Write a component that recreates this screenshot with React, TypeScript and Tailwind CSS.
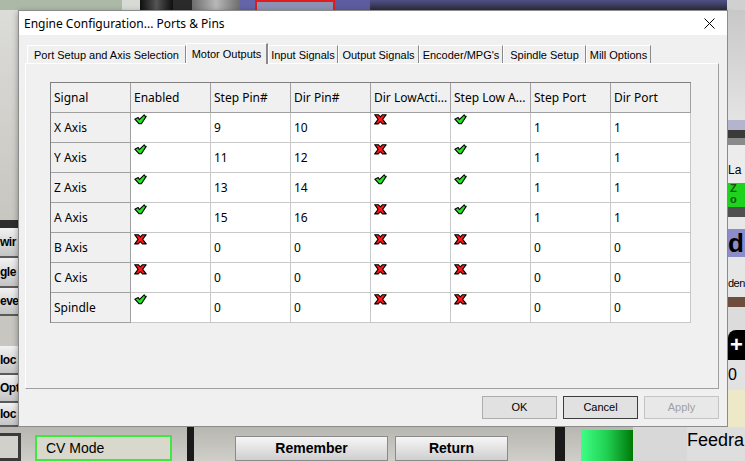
import React from "react";

const Check = () => (
  <svg width="13" height="11" viewBox="0 0 13 11" className="block">
    <path
      d="M0.8 5.2 L4.2 3.6 L5.3 5.6 L10.2 0.8 L11 2.2 L12.2 2.4 L7.4 9.8 L5.2 9.8 Z"
      fill="#1ee61e"
      stroke="#000"
      strokeWidth="1.1"
      strokeLinejoin="round"
    />
  </svg>
);

const Cross = () => (
  <svg width="13" height="11" viewBox="0 0 13 11" className="block">
    <path
      d="M0.7 0.7 L4.3 0.7 L6.3 2.9 L8.5 0.7 L12.2 0.7 L8.6 5.3 L12.2 9.9 L8.5 9.9 L6.3 7.6 L4.3 9.9 L0.7 9.9 L4.1 5.3 Z"
      fill="#ff1616"
      stroke="#000"
      strokeWidth="1.1"
      strokeLinejoin="round"
    />
  </svg>
);

const headers = [
  "Signal",
  "Enabled",
  "Step Pin#",
  "Dir Pin#",
  "Dir LowActi...",
  "Step Low A...",
  "Step Port",
  "Dir Port",
];

const rows: string[][] = [
  ["X Axis", "c", "9", "10", "x", "c", "1", "1"],
  ["Y Axis", "c", "11", "12", "x", "c", "1", "1"],
  ["Z Axis", "c", "13", "14", "c", "c", "1", "1"],
  ["A Axis", "c", "15", "16", "x", "c", "1", "1"],
  ["B Axis", "x", "0", "0", "x", "x", "0", "0"],
  ["C Axis", "x", "0", "0", "x", "x", "0", "0"],
  ["Spindle", "c", "0", "0", "x", "x", "0", "0"],
];

const tabs = [
  { label: "Port Setup and Axis Selection", w: "w-[159px]" },
  { label: "Motor Outputs", w: "w-[82px]", active: true },
  { label: "Input Signals", w: "w-[70px]" },
  { label: "Output Signals", w: "w-[81px]" },
  { label: "Encoder/MPG's", w: "w-[84px]" },
  { label: "Spindle Setup", w: "w-[83px]" },
  { label: "Mill Options", w: "w-[65px]" },
];

function Table() {
  return (
    <div className="w-[641px] border-t border-l border-[#808080] grid grid-cols-[repeat(8,80px)] font-['Noto_Sans',sans-serif] text-[12px] text-black">
      {headers.map((h) => (
        <div
          key={h}
          className="h-[30px] bg-[#f0f0f0] border-r border-b border-[#a0a0a0] flex items-center pl-[3px] whitespace-nowrap overflow-hidden"
        >
          {h}
        </div>
      ))}
      {rows.map((r) =>
        r.map((v, i) => {
          if (i === 0)
            return (
              <div
                key={r[0] + i}
                className="h-[30px] bg-[#f0f0f0] border-r border-b border-[#a0a0a0] flex items-center pl-[3px]"
              >
                {v}
              </div>
            );
          if (v === "c" || v === "x")
            return (
              <div
                key={r[0] + i}
                className="h-[30px] bg-white border-r border-b border-[#c8c8c8] pl-[3px] pt-[1px]"
              >
                {v === "c" ? <Check /> : <Cross />}
              </div>
            );
          return (
            <div
              key={r[0] + i}
              className="h-[30px] bg-white border-r border-b border-[#c8c8c8] flex items-center pl-[3px] pt-[1px]"
            >
              {v}
            </div>
          );
        })
      )}
    </div>
  );
}

function Dialog() {
  return (
    <div className="w-[710px] h-[417px] flex flex-col border border-[#8c8c8c] bg-[#f0f0f0] shadow-[0_2px_6px_rgba(0,0,0,0.35)]">
      <div className="h-[24px] bg-white flex items-center justify-between pl-[5px] pr-[12px] pt-[1px] font-['Noto_Sans',sans-serif] text-[12px] text-black">
        <span>Engine Configuration... Ports &amp; Pins</span>
        <svg width="11" height="11" viewBox="0 0 11 11" className="block">
          <path d="M0.5 0.5 L10.5 10.5 M10.5 0.5 L0.5 10.5" stroke="#000" strokeWidth="1" />
        </svg>
      </div>
      <div className="flex-1 flex flex-col px-[6px] pt-[8px]">
        <div className="h-[20px] flex items-end pl-[2px] font-['Liberation_Sans',sans-serif] text-[11px] text-black">
          {tabs.map((t) =>
            t.active ? (
              <div
                key={t.label}
                className={`${t.w} h-[21px] -mb-px relative z-10 bg-[#f0f0f0] border-t border-l border-white border-r-2 border-r-[#8a8a8a] flex items-center justify-center whitespace-nowrap`}
              >
                {t.label}
              </div>
            ) : (
              <div
                key={t.label}
                className={`${t.w} h-[18px] self-end bg-[#f0f0f0] border-t border-l border-white border-r border-r-[#8a8a8a] flex items-center justify-center whitespace-nowrap pt-[1px]`}
              >
                {t.label}
              </div>
            )
          )}
        </div>
        <div className="w-[694px] h-[326px] border-t border-l border-white border-r border-b border-r-[#a0a0a0] border-b-[#a0a0a0] bg-[#f0f0f0] pl-[24px] pt-[18px]">
          <Table />
        </div>
        <div className="mt-[7px] w-[694px] flex justify-end gap-[6px] font-['Liberation_Sans',sans-serif] text-[11px]">
          <div className="w-[75px] h-[23px] bg-[#e1e1e1] border border-[#adadad] flex items-center justify-center text-black">
            OK
          </div>
          <div className="w-[75px] h-[23px] bg-[#e1e1e1] border border-[#3c3c3c] flex items-center justify-center text-black">
            Cancel
          </div>
          <div className="w-[75px] h-[23px] bg-[#e8e8e8] border border-[#c4c4c4] flex items-center justify-center text-[#a0a0a0]">
            Apply
          </div>
        </div>
      </div>
    </div>
  );
}

function TopStrip() {
  return (
    <div className="h-[10px] flex">
      <div className="w-[122px] bg-[#acb9a6]" />
      <div className="w-[18px] bg-[#d8dad6]" />
      <div className="w-[33px] bg-gradient-to-r from-[#101010] via-[#555] to-[#101010]" />
      <div className="w-[19px] bg-[#2a2a2a]" />
      <div className="w-[48px] bg-gradient-to-r from-[#6e6e6e] via-[#b8b8b8] to-[#6e6e6e]" />
      <div className="w-[15px] bg-[#6464a8]" />
      <div className="w-[80px] border-x-2 border-t-2 border-[#e01c1c] bg-[#8c92b4]" />
      <div className="w-[35px] bg-[#5c5c9e]" />
      <div className="w-[357px] bg-gradient-to-b from-[#50508a] to-[#2c2c3a]" />
      <div className="w-[18px] bg-[#d0d0d0]" />
    </div>
  );
}

function LeftBtn({ t, h }: { t: string; h: string }) {
  return (
    <div
      className={`${h} bg-gradient-to-b from-[#f2f2f2] to-[#c4c4c4] border-b-2 border-[#5a5a5a] flex items-center overflow-hidden font-['Liberation_Sans',sans-serif] font-bold text-[12px] tracking-[-0.5px] text-black whitespace-nowrap`}
    >
      {t}
    </div>
  );
}

function LeftStrip() {
  return (
    <div className="w-[18px] flex flex-col bg-[#d4d2cc]">
      <div className="h-[210px] bg-gradient-to-b from-[#dcdcd8] to-[#c8c6c0]" />
      <div className="h-[8px] bg-[#2e2e2e]" />
      <LeftBtn t="wir" h="h-[30px]" />
      <LeftBtn t="gle" h="h-[30px]" />
      <LeftBtn t="eve" h="h-[28px]" />
      <div className="h-[30px] bg-[#c8c6c0]" />
      <LeftBtn t="loc" h="h-[29px]" />
      <LeftBtn t="Opt" h="h-[28px]" />
      <LeftBtn t="loc" h="h-[24px]" />
    </div>
  );
}

function RightStrip() {
  return (
    <div className="w-[17px] flex flex-col bg-[#d6d6d6] overflow-hidden font-['Liberation_Sans',sans-serif] text-black">
      <div className="h-[110px] bg-gradient-to-b from-[#c8c8c8] to-[#e4e4e4]" />
      <div className="h-[10px] bg-[#b4b4cc]" />
      <div className="h-[8px] bg-[#3a3a3a]" />
      <div className="h-[7px] bg-[#8a8a8a]" />
      <div className="h-[38px] bg-[#ececec] flex items-end pb-[4px] text-[12px] whitespace-nowrap">La</div>
      <div className="h-[24px] bg-[#1ed21e] text-[11px] font-bold leading-[11px] text-[#115511] pl-[2px]">
        Z<br />o
      </div>
      <div className="h-[10px] bg-[#505050]" />
      <div className="h-[12px] bg-[#e8e8e8]" />
      <div className="h-[28px] bg-[#8c8cc8] font-bold text-[26px] leading-[28px] whitespace-nowrap">d</div>
      <div className="h-[40px] bg-[#e6e6e6] flex items-end pb-[6px] text-[11px] tracking-[-0.5px] whitespace-nowrap">den</div>
      <div className="h-[10px] bg-[#6e4c3e]" />
      <div className="h-[23px] bg-[#dcdcdc]" />
      <div className="h-[30px] bg-[#dcdcdc]">
        <div className="w-[17px] h-[30px] bg-black rounded-tl-[8px] flex items-center justify-center text-white font-bold text-[22px] leading-none">
          +
        </div>
      </div>
      <div className="h-[30px] bg-[#e2e2e2] flex items-center text-[16px]">0</div>
      <div className="flex-1 bg-[#ece8c8]" />
    </div>
  );
}

function BottomStrip() {
  return (
    <div className="h-[34px] flex bg-gradient-to-b from-[#b8b6b0] to-[#d0cec8] font-['Liberation_Sans',sans-serif] text-black">
      <div className="w-[21px] mt-[6px] border-y-[3px] border-r-[3px] border-[#3a3a3a] bg-[#d2d0ca]" />
      <div className="w-[14px]" />
      <div className="w-[137px] mt-[8px] border-2 border-[#3ee83e] bg-[#d8d8cc] flex items-center pl-[9px] text-[14px]">
        CV Mode
      </div>
      <div className="w-[15px]" />
      <div className="w-[7px] bg-[#1a1a1a]" />
      <div className="w-[41px]" />
      <div className="w-[153px] mt-[9px] border border-[#8a8a8a] bg-gradient-to-b from-[#f6f6f6] to-[#cfcfcf] flex items-center justify-center font-bold text-[14px]">
        Remember
      </div>
      <div className="w-[7px]" />
      <div className="w-[113px] mt-[9px] border border-[#8a8a8a] bg-gradient-to-b from-[#f6f6f6] to-[#cfcfcf] flex items-center justify-center font-bold text-[14px]">
        Return
      </div>
      <div className="w-[47px]" />
      <div className="w-[10px] bg-[#1a1a1a]" />
      <div className="w-[16px]" />
      <div className="w-[52px] mt-[3px] bg-gradient-to-r from-[#3cff84] via-[#20d050] to-[#007a00]" />
      <div className="w-[54px] bg-[#d8d8d8]" />
      <div className="flex-1 bg-[#dedede] overflow-hidden whitespace-nowrap text-[18px] leading-[24px] pt-[1px]">
        Feedra
      </div>
    </div>
  );
}

export default function App() {
  return (
    <div className="w-[745px] h-[461px] overflow-hidden flex flex-col bg-[#c8c4bc]">
      <TopStrip />
      <div className="flex h-[417px]">
        <LeftStrip />
        <Dialog />
        <RightStrip />
      </div>
      <BottomStrip />
    </div>
  );
}
